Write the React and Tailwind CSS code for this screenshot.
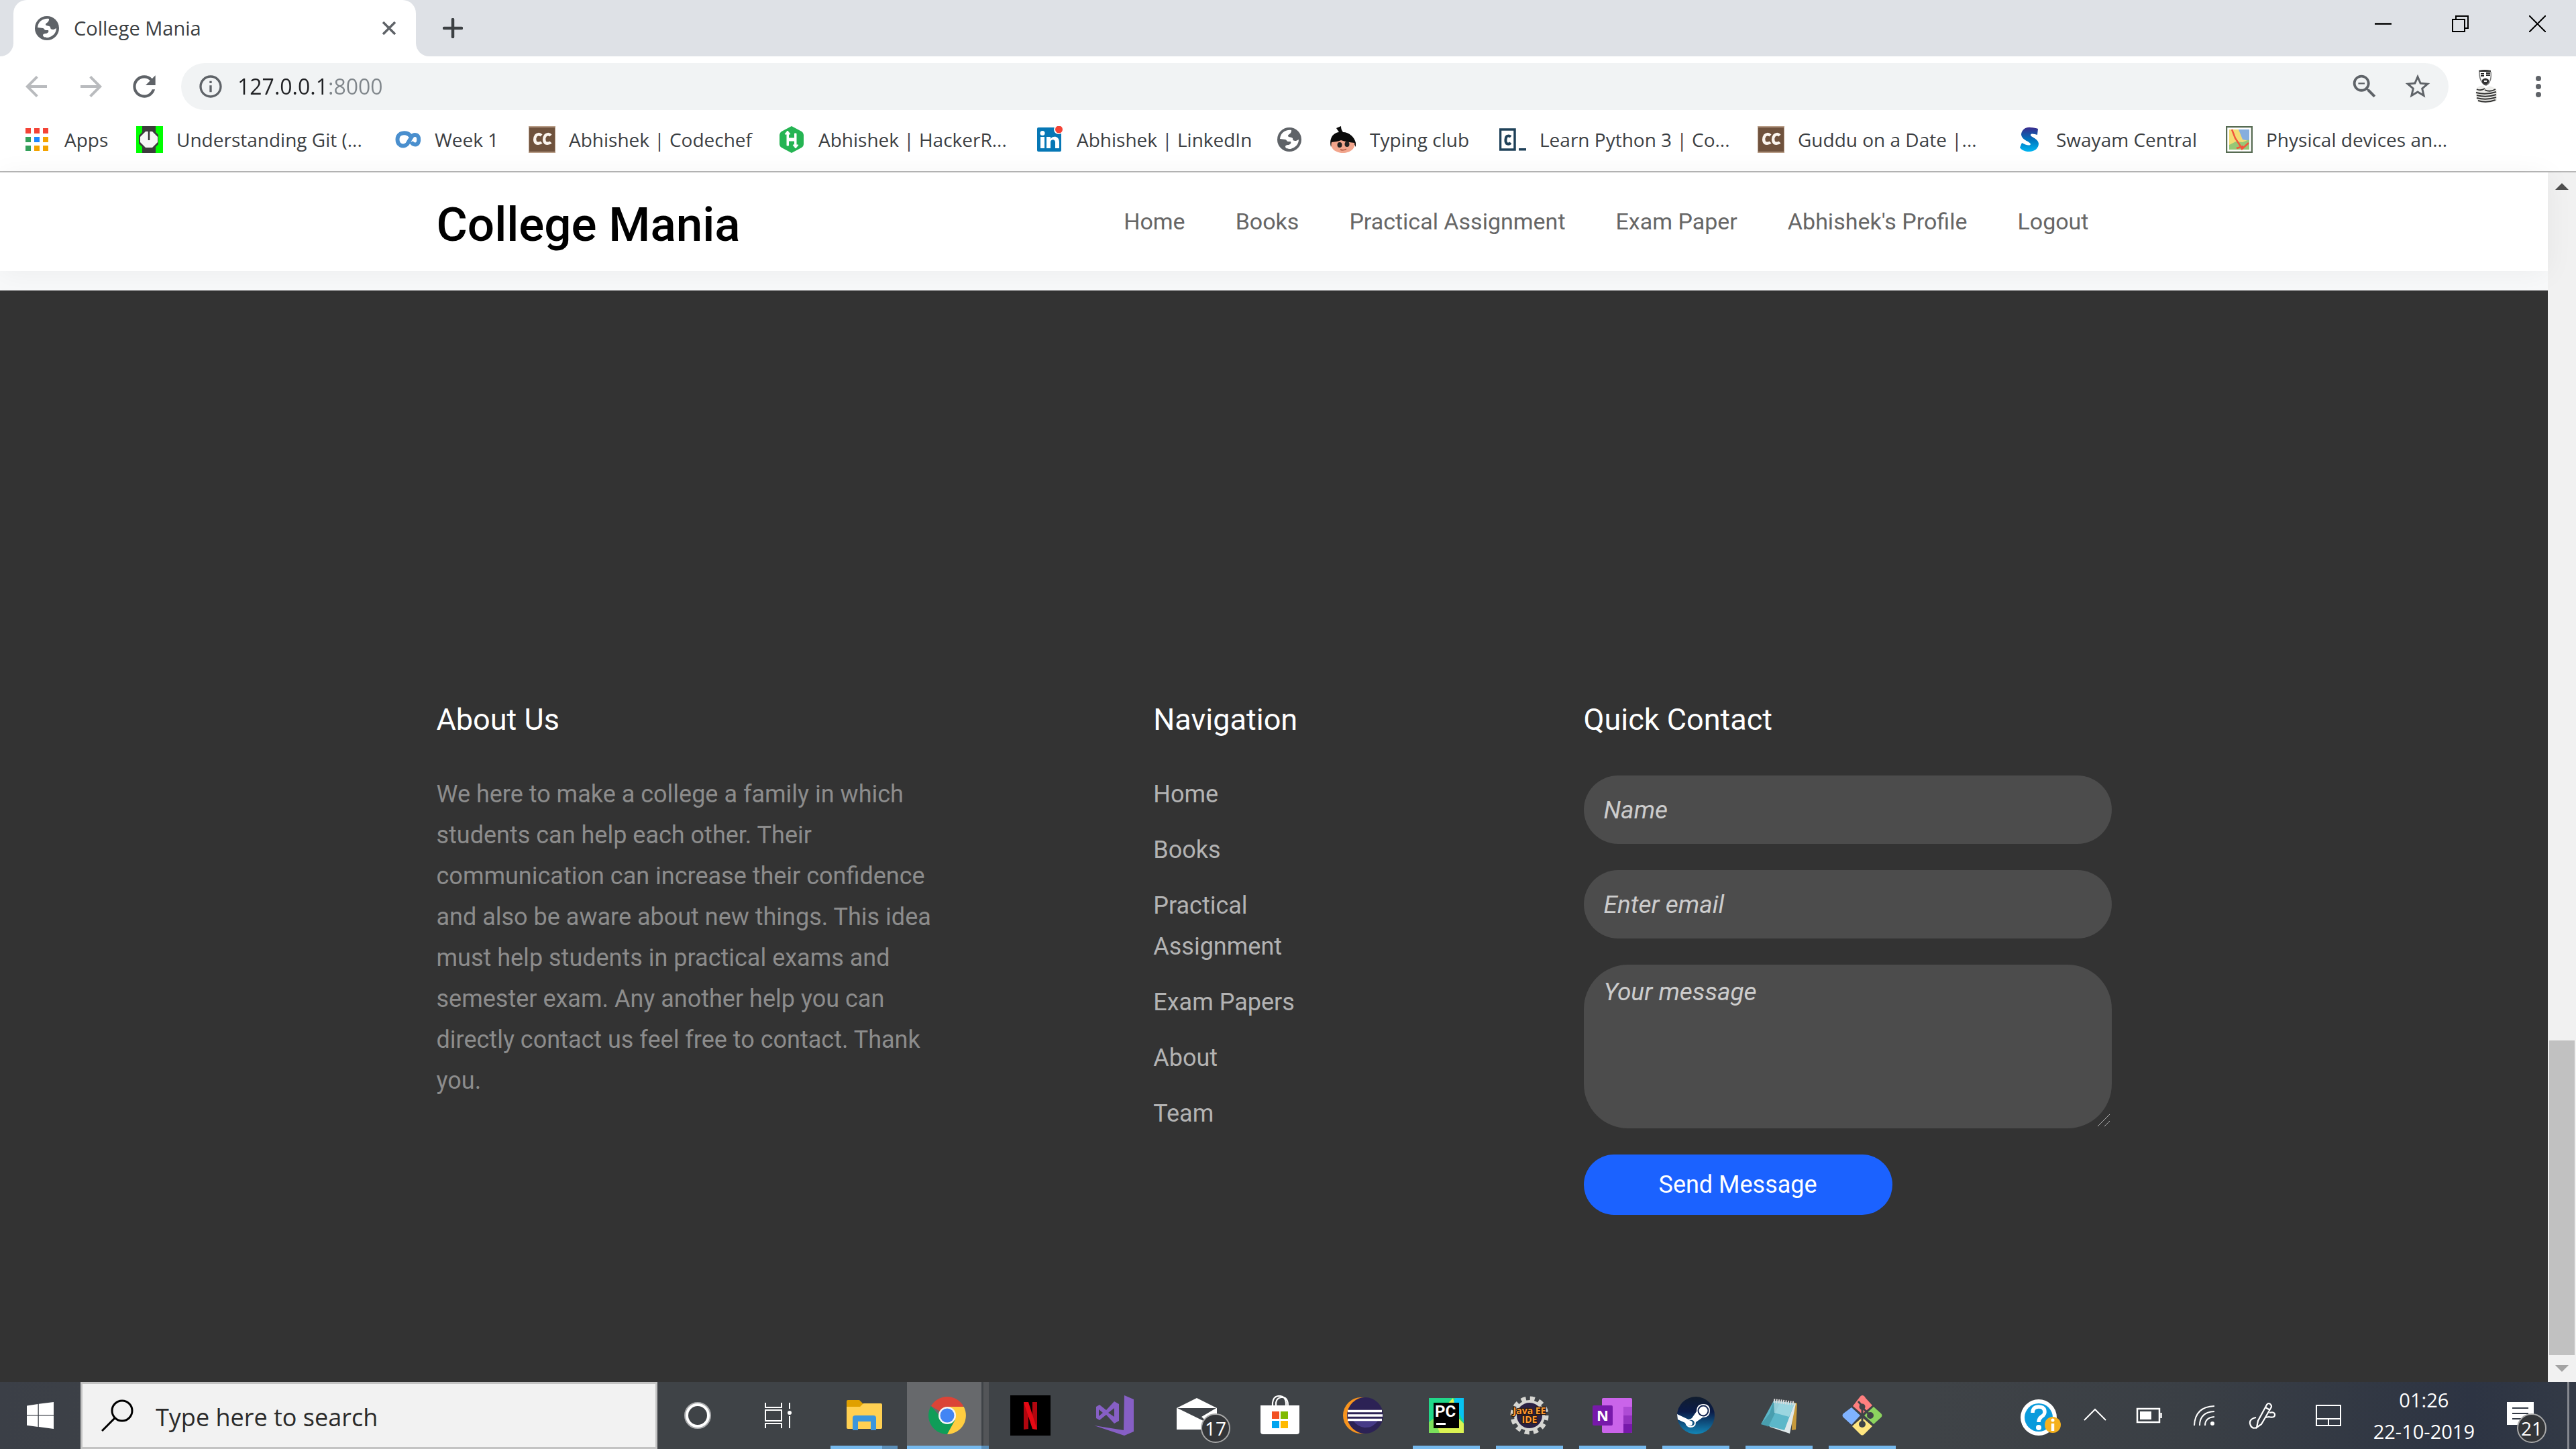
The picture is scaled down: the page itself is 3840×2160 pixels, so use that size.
import React from "react";

/* ---------- shared glyphs ---------- */

const materialPaths = {
  back: "M20 11H7.83l5.59-5.59L12 4l-8 8 8 8 1.41-1.41L7.83 13H20v-2z",
  forward: "M12 4l-1.41 1.41L16.17 11H4v2h12.17l-5.58 5.59L12 20l8-8z",
  reload:
    "M17.65 6.35C16.2 4.9 14.21 4 12 4c-4.42 0-7.99 3.58-7.99 8s3.57 8 7.99 8c3.73 0 6.84-2.55 7.73-6h-2.08c-.82 2.33-3.04 4-5.65 4-3.31 0-6-2.69-6-6s2.69-6 6-6c1.66 0 3.14.69 4.22 1.78L13 11h7V4l-2.35 2.35z",
  info: "M11 7h2v2h-2zm0 4h2v6h-2zm1-9C6.48 2 2 6.48 2 12s4.48 10 10 10 10-4.48 10-10S17.52 2 12 2zm0 18c-4.41 0-8-3.59-8-8s3.59-8 8-8 8 3.59 8 8-3.59 8-8 8z",
  zoomOut:
    "M15.5 14h-.79l-.28-.27C15.41 12.59 16 11.11 16 9.5 16 5.91 13.09 3 9.5 3S3 5.91 3 9.5 5.91 16 9.5 16c1.61 0 3.09-.59 4.23-1.57l.27.28v.79l5 4.99L20.49 19l-4.99-5zm-6 0C7.01 14 5 11.99 5 9.5S7.01 5 9.5 5 14 7.01 14 9.5 11.99 14 9.5 14zM7 9h5v1.2H7z",
  star: "M22 9.24l-7.19-.62L12 2 9.19 8.63 2 9.24l5.46 4.73L5.82 21 12 17.27 18.18 21l-1.63-7.03L22 9.24zM12 15.4l-3.76 2.27 1-4.28-3.32-2.88 4.38-.38L12 6.1l1.71 4.04 4.38.38-3.32 2.88 1 4.28L12 15.4z",
};

function Material({ name, className }) {
  return (
    <svg viewBox="0 0 24 24" className={className} fill="currentColor" aria-hidden="true">
      <path d={materialPaths[name]} />
    </svg>
  );
}

function Globe() {
  return (
    <svg viewBox="0 0 36 36" className="size-9 shrink-0" aria-hidden="true">
      <circle cx="18" cy="18" r="18" fill="#5f6368" />
      <path
        d="M21 4C12 3 5 8 4 17l8 1c2 0 2 3 4 3h4c1 2 0 4-3 5-2 0-5 0-5 3 1 3 5 3 8 3 7-2 12-7 12-14l-4 2c-4 0-5-1-5-4-2-2-6-1-7-3 0-3 3-3 4-5 1-1 1-3 1-4z"
        fill="#fff"
      />
    </svg>
  );
}

/* ---------- bookmark icons ---------- */

function AppsIcon() {
  const cells = ["#f44336", "#f44336", "#f44336", "#34a05a", "#1e88ff", "#f4a300", "#34a05a", "#f4a300", "#f4a300"];
  return (
    <svg viewBox="0 0 38 34" className="h-[34px] w-[38px] shrink-0" aria-hidden="true">
      {cells.map((c, i) => (
        <rect key={i} x={(i % 3) * 13} y={Math.floor(i / 3) * 13} width="8" height="8" fill={c} />
      ))}
    </svg>
  );
}

function ClockIcon() {
  return (
    <svg viewBox="0 0 40 40" className="size-10 shrink-0" aria-hidden="true">
      <rect width="40" height="40" fill="#00ff00" />
      <path d="M9 0h20v9l4 4v14l-4 4v9H9v-9l-5-5V14l5-5z" fill="#3c3c3c" />
      <path d="M14 8h10l8 8v8l-8 8H14l-8-8v-8z" fill="#f5f5f5" />
      <path d="M19 8v13" stroke="#333" strokeWidth="2.5" />
    </svg>
  );
}

function CourseraIcon() {
  return (
    <svg viewBox="0 0 40 40" className="size-10 shrink-0" aria-hidden="true">
      <path
        d="M25 15C22 10 15 9 10 11.500 4 15 4 25 10 28.500c5 2.500 10 0 12-5l5-8c3-4 9-3 10 2 1 6-1 10-5 10-3 0-5-2-6-4"
        transform="translate(-1 0)"
        fill="none"
        stroke="#4a8fce"
        strokeWidth="6"
      />
    </svg>
  );
}

function CodechefIcon() {
  return (
    <svg viewBox="0 0 40 40" className="size-10 shrink-0" aria-hidden="true">
      <rect width="40" height="40" fill="#b79c86" />
      <rect x="1" y="2" width="38" height="36" fill="#6f523d" />
      <path
        d="M19 14c-3-3-6-2-8 0-3 4-2 9 0 11 2 1 6 1 8-1M33 14c-3-3-6-2-8 0-3 4-2 9 0 11 2 1 6 1 8-1"
        fill="none"
        stroke="#fbf5ee"
        strokeWidth="4.500"
      />
    </svg>
  );
}

function HackerRankIcon() {
  return (
    <svg viewBox="0 0 40 40" className="size-10 shrink-0" aria-hidden="true">
      <path d="M20 0l15 8q3 2 3 5v14q0 3-3 5l-15 8-15-8q-3-2-3-5V13q0-3 3-5z" fill="#25b453" />
      <path
        d="M13 12h2.500V29H13zM16 18h8v4h-8zM24.500 11v17H27V11zM14 7l-4 5h8zM26 33l-4-5h8z"
        fill="#fff"
        stroke="#fff"
      />
    </svg>
  );
}

function LinkedInIcon() {
  return (
    <svg viewBox="0 0 40 40" className="size-10 shrink-0" aria-hidden="true">
      <rect x="1" y="2" width="36" height="36" rx="2" fill="#0677b5" />
      <circle cx="9" cy="10.500" r="3.500" fill="#fff" />
      <path d="M6 16h6v17H6zM15 16h6v3c3-5 13-5 13 5v9h-6v-9c0-5-7-5-7 0v9h-6z" fill="#fff" />
      <circle cx="33" cy="5" r="7" fill="#fff" />
      <circle cx="33.500" cy="5" r="5.500" fill="#f44336" />
    </svg>
  );
}

function TypingClubIcon() {
  return (
    <svg viewBox="0 0 40 40" className="size-10 shrink-0" aria-hidden="true">
      <path d="M10 3l7-3c0 4 1 6 3 9 9 0 17 7 19 16v6l-3-5H4l-2 5C-1 20 4 10 14 9z" fill="#0b0b0b" />
      <path d="M3 24c5-1 10-1 14-3 5 2 12 3 20 4 2 8-6 15-17 15S0 33 3 24z" fill="#f2a58c" />
      <ellipse cx="15" cy="28" rx="3.500" ry="4" fill="#222" />
      <ellipse cx="26" cy="27" rx="3.500" ry="4" fill="#222" />
      <path d="M16 35q5 2 9-1" stroke="#a4503c" strokeWidth="1.500" fill="none" />
    </svg>
  );
}

function CodecademyIcon() {
  return (
    <svg viewBox="0 0 40 40" className="size-10 shrink-0" aria-hidden="true">
      <rect x="1.500" y="5" width="21.500" height="30" fill="#fff" stroke="#1f4159" strokeWidth="3.500" />
      <path d="M17 16c-2-2-6-2-7 1-1 4-1 7 1 9 2 1 4 1 6-1" fill="none" stroke="#1f4159" strokeWidth="4" />
      <rect x="29" y="33" width="11" height="3.500" fill="#1f4159" />
    </svg>
  );
}

function SwayamIcon() {
  return (
    <svg viewBox="0 0 40 40" className="size-10 shrink-0" aria-hidden="true">
      <defs>
        <linearGradient id="swayam" x1="0" y1="0" x2="0" y2="1">
          <stop offset="0" stopColor="#3a2a8c" />
          <stop offset="0.5" stopColor="#0072bc" />
          <stop offset="1" stopColor="#00b5f1" />
        </linearGradient>
      </defs>
      <path
        d="M33 4l-1 9c-4-1-9-3-10 0s11 5 12 13c0 7-6 12-14 12-6 0-11-2-14-6l3-7c5 3 12 5 13 2 0-4-14-6-14-15C9 5 15 1 22 2c5 0 8 1 11 2z"
        fill="url(#swayam)"
      />
    </svg>
  );
}

function MapIcon() {
  return (
    <svg viewBox="0 0 40 40" className="size-10 shrink-0" aria-hidden="true">
      <rect x="1" y="1" width="38" height="38" fill="#fff" stroke="#566b52" strokeWidth="2.500" />
      <rect x="5" y="5" width="30" height="30" fill="#f3dc74" />
      <path d="M19 5h16v17l-10-2z" fill="#86aede" />
      <path d="M5 28l10-5 10 1 10-4v15H5z" fill="#97c776" />
      <path d="M9 5l5 13 6 9 5 8M34 25l-11 10M16 33l10-3" fill="none" stroke="#f2553c" strokeWidth="2.500" />
    </svg>
  );
}

/* ---------- browser chrome ---------- */

function TabStrip() {
  return (
    <div className="flex h-[84px] items-stretch justify-between bg-[#dee1e6] text-[29px] text-[#3c4043]">
      <div className="flex items-center">
        <div className="flex h-full w-5 items-end bg-white">
          <span className="h-full w-full rounded-br-[20px] bg-[#dee1e6]" />
        </div>
        <div className="flex h-full w-[600px] items-center rounded-t-[20px] bg-white px-8">
          <Globe />
          <span className="ml-[22px] flex-1">College Mania</span>
          <button type="button" aria-label="Close tab" className="-mr-3.5 p-3">
            <svg viewBox="0 0 20 20" className="size-5">
              <path d="M1 1l18 18M19 1L1 19" stroke="#5f6368" strokeWidth="3.500" />
            </svg>
          </button>
        </div>
        <div className="flex h-full w-5 bg-white">
          <span className="h-full w-full rounded-bl-[20px] bg-[#dee1e6]" />
        </div>
        <button type="button" aria-label="New tab" className="ml-5">
          <svg viewBox="0 0 30 30" className="size-[30px]">
            <path d="M15 2v26M2 15h26" stroke="#3c4043" strokeWidth="4.500" strokeLinecap="round" />
          </svg>
        </button>
      </div>
      <div className="flex h-[70px] items-center">
        <button type="button" aria-label="Minimize" className="flex w-[115px] justify-center">
          <svg viewBox="0 0 25 25" className="size-[25px]">
            <path d="M0 12.500h25" stroke="#000" strokeWidth="2.500" />
          </svg>
        </button>
        <button type="button" aria-label="Restore" className="flex w-[115px] justify-center">
          <svg viewBox="0 0 25 25" className="size-[25px]" fill="none" stroke="#000" strokeWidth="2">
            <path d="M1 6h18v18H1zM6 6V1h18v18h-5" />
          </svg>
        </button>
        <button type="button" aria-label="Close" className="flex w-[115px] justify-center">
          <svg viewBox="0 0 25 25" className="size-[25px]">
            <path d="M0 0l25 25M25 0L0 25" stroke="#000" strokeWidth="2" />
          </svg>
        </button>
      </div>
    </div>
  );
}

function Avatar() {
  return (
    <svg viewBox="0 0 50 50" className="size-[50px]" aria-hidden="true">
      <path d="M15 1q9-2 18 0v3l-4-1H20l-4 1z" fill="#333" />
      <path d="M16 3q0 10 3 14 3 6 7 6 4-1 6-7 2-5 1-13" fill="#fff" stroke="#777" strokeWidth="1.500" />
      <path d="M18 6h5M26 8h6M18 9h5M26 5h6" stroke="#222" strokeWidth="2" />
      <path d="M20 15q5-5 10 0v4q-5 7-10 0z" fill="#333" />
      <rect x="23" y="16" width="4" height="2" fill="#eee" />
      <path d="M12 27q7-5 10-3 3 6 9 0 11 3 11 8v14q-14 6-28 2-5-8-2-21z" fill="#ededea" />
      <path
        d="M12 29q6 3 12-1M24 30q8 4 16-1M11 34q14 4 30-1M12 38q14 4 29-1M12 42q14 4 29-1M14 46q12 4 26-1"
        stroke="#333"
        strokeWidth="1.900"
        fill="none"
      />
    </svg>
  );
}

function Toolbar() {
  return (
    <div className="flex h-[90px] items-center bg-white">
      <button type="button" aria-label="Back" className="ml-[30px] text-[#b9bbbe]">
        <Material name="back" className="size-12" />
      </button>
      <button type="button" aria-label="Forward" className="ml-[34px] text-[#b9bbbe]">
        <Material name="forward" className="size-12" />
      </button>
      <button type="button" aria-label="Reload" className="ml-[30px] text-[#5f6368]">
        <Material name="reload" className="size-[50px]" />
      </button>
      <div className="ml-[30px] flex h-[70px] flex-1 items-center rounded-full bg-[#f1f3f4] px-6 text-[#5f6368]">
        <Material name="info" className="size-10" />
        <input
          aria-label="Address"
          defaultValue="127.0.0.1:8000"
          className="ml-5 flex-1 bg-[linear-gradient(to_right,#202124_136px,#80868b_136px)] bg-clip-text text-[32px] text-transparent outline-none"
        />
        <button type="button" aria-label="Zoom">
          <Material name="zoomOut" className="size-[46px]" />
        </button>
        <button type="button" aria-label="Bookmark this page" className="ml-[34px]">
          <Material name="star" className="size-11" />
        </button>
      </div>
      <button type="button" aria-label="Profile" className="ml-[30px]">
        <Avatar />
      </button>
      <button type="button" aria-label="Menu" className="ml-[30px] mr-8">
        <svg viewBox="0 0 48 48" className="size-12" fill="#5f6368">
          <circle cx="24" cy="12" r="4" />
          <circle cx="24" cy="24" r="4" />
          <circle cx="24" cy="36" r="4" />
        </svg>
      </button>
    </div>
  );
}

const bookmarks = [
  { icon: <AppsIcon />, label: "Apps", width: "w-[125px]" },
  { icon: <ClockIcon />, label: "Understanding Git (...", width: "w-[345px]" },
  { icon: <CourseraIcon />, label: "Week 1", width: "w-[160px]" },
  { icon: <CodechefIcon />, label: "Abhishek | Codechef", width: "w-[332px]" },
  { icon: <HackerRankIcon />, label: "Abhishek | HackerR...", width: "w-[345px]" },
  { icon: <LinkedInIcon />, label: "Abhishek | LinkedIn", width: "w-[319px]" },
  { icon: <Globe />, label: "", width: "w-[38px]" },
  { icon: <TypingClubIcon />, label: "Typing club", width: "w-[213px]" },
  { icon: <CodecademyIcon />, label: "Learn Python 3 | Co...", width: "w-[345px]" },
  { icon: <CodechefIcon />, label: "Guddu on a Date |...", width: "w-[345px]" },
  { icon: <SwayamIcon />, label: "Swayam Central", width: "w-[273px]" },
  { icon: <MapIcon />, label: "Physical devices an...", width: "w-[345px]" },
];

function BookmarksBar() {
  return (
    <nav
      aria-label="Bookmarks"
      className="flex h-[83px] items-start gap-10 border-b-2 border-[#b6b6b6] bg-white pl-[38px] pt-3.5 text-[28px] leading-10 text-[#3c4043]"
    >
      {bookmarks.map((b, i) => (
        <a
          key={i}
          href="#bookmark"
          aria-label={b.label || "Untitled bookmark"}
          className={`flex h-10 shrink-0 items-center gap-5 whitespace-nowrap ${b.width}`}
        >
          {b.icon}
          {b.label && <span>{b.label}</span>}
        </a>
      ))}
    </nav>
  );
}

/* ---------- web page ---------- */

const menu = ["Home", "Books", "Practical Assignment", "Exam Paper", "Abhishek's Profile", "Logout"];
const footerLinks = ["Home", "Books", "Practical Assignment", "Exam Papers", "About", "Team"];

function SiteHeader() {
  return (
    <header className="relative h-[147px] bg-white shadow-[0_4px_40px_rgba(0,0,0,0.05)]">
      <div className="mx-auto flex h-full max-w-[2565px] items-center justify-between px-[34px]">
        <a href="#home" className="pt-2 text-[71px] font-medium leading-none text-black">
          College Mania
        </a>
        <nav aria-label="Main" className="flex gap-[7px] text-[34px] text-[#666666]">
          {menu.map((m) => (
            <a key={m} href="#menu" className="px-[34px]">
              {m}
            </a>
          ))}
        </nav>
      </div>
    </header>
  );
}

function FooterTitle({ children }) {
  return <h2 className="mb-[54px] text-[45px] leading-[54px] text-white">{children}</h2>;
}

function SiteFooter() {
  const field =
    "block h-[102px] w-full rounded-full bg-[#4c4c4c] px-[30px] text-[37px] text-white italic outline-none placeholder:text-[#cccccc] placeholder:opacity-100";
  return (
    <footer className="flex-1 bg-[#333333] pt-[613px] text-[36px] leading-[61px]">
      <div className="mx-auto grid max-w-[2565px] grid-cols-12">
        <section className="col-span-5 px-[34px]">
          <FooterTitle>About Us</FooterTitle>
          <p className="max-w-[760px] text-[#8c8c8c]">
            We here to make a college a family in which students can help each other. Their communication can increase
            their confidence and also be aware about new things. This idea must help students in practical exams and
            semester exam. Any another help you can directly contact us feel free to contact. Thank you.
          </p>
        </section>
        <section className="col-span-3 px-[34px]">
          <FooterTitle>Navigation</FooterTitle>
          <ul className="flex max-w-[250px] flex-col gap-[22px] text-[#b3b3b3]">
            {footerLinks.map((l) => (
              <li key={l}>
                <a href="#footer">{l}</a>
              </li>
            ))}
          </ul>
        </section>
        <section className="col-span-4 px-[34px]">
          <FooterTitle>Quick Contact</FooterTitle>
          <form className="flex flex-col items-start gap-[39px] pt-0.5" onSubmit={(e) => e.preventDefault()}>
            <input aria-label="Name" type="text" placeholder="Name" className={field} />
            <input aria-label="Enter email" type="email" placeholder="Enter email" className={field} />
            <div className="relative w-full">
              <textarea
                aria-label="Your message"
                placeholder="Your message"
                className="block h-[244px] w-full resize-none rounded-[66px] bg-[#4c4c4c] px-[30px] pt-3.5 text-[37px] leading-[54px] text-white italic outline-none placeholder:text-[#cccccc] placeholder:opacity-100"
              />
              <svg viewBox="0 0 20 20" className="absolute bottom-0.5 right-0.5 size-5" aria-hidden="true">
                <path d="M1 19L19 1M11 19l8-8" stroke="#b5b5b5" strokeWidth="1" />
              </svg>
            </div>
            <button type="submit" className="h-[90px] rounded-full bg-[#1b62ff] px-28 text-white">
              Send Message
            </button>
          </form>
        </section>
      </div>
    </footer>
  );
}

function Scrollbar() {
  return (
    <div className="flex w-[42px] flex-col bg-[#f1f1f1]">
      <button type="button" aria-label="Scroll up" className="flex h-[42px] items-center justify-center">
        <svg viewBox="0 0 20 10" className="h-2.5 w-5" fill="#505050">
          <path d="M0 10L10 0l10 10z" />
        </svg>
      </button>
      <div className="flex flex-1 flex-col justify-end px-0.5">
        <div className="h-[469px] bg-[#c1c1c1]" />
      </div>
      <button type="button" aria-label="Scroll down" className="flex h-10 items-center justify-center">
        <svg viewBox="0 0 20 10" className="h-2.5 w-5" fill="#a3a3a3">
          <path d="M0 0L10 10 20 0z" />
        </svg>
      </button>
    </div>
  );
}

/* ---------- taskbar icons (60px box) ---------- */

function TaskIcon({ children }) {
  return (
    <svg viewBox="0 0 60 60" className="size-[60px]" aria-hidden="true">
      {children}
    </svg>
  );
}

const ExplorerIcon = () => (
  <TaskIcon>
    <path d="M4 9q0-2 2-2h17l5 5v9H4z" fill="#e0a000" />
    <path d="M4 17h20l5-5h26q2 0 2 2v34q0 2-2 2H6q-2 0-2-2z" fill="#ffd052" />
    <path d="M13 52V34q0-4 4-4h27q4 0 4 4v18h-8V39H21v13z" fill="#3a96dd" />
  </TaskIcon>
);

const ChromeIcon = () => (
  <TaskIcon>
    <path d="M30 30L5.800 16A28 28 0 0 1 54.200 16z" fill="#db4437" />
    <path d="M30 30H18L5.800 16A28 28 0 0 0 30 58l12-21z" fill="#0f9d58" />
    <path d="M30 17h24.700A28 28 0 0 1 30 58l11.500-21z" fill="#ffcd40" />
    <circle cx="30" cy="30" r="13" fill="#f5f5f5" />
    <circle cx="30" cy="30" r="10.500" fill="#4285f4" />
  </TaskIcon>
);

const NetflixIcon = () => (
  <TaskIcon>
    <rect width="60" height="60" fill="#000" />
    <path d="M20 10h7v40l-7 1zM33 10h7v41l-7-1z" fill="#b1060f" />
    <path d="M20 10h7l13 41-7-1z" fill="#e50914" />
  </TaskIcon>
);

const VisualStudioIcon = () => (
  <TaskIcon>
    <path d="M46 0l14 6v48l-14 6L1 45l44 7z" fill="#865fc5" />
    <path
      fillRule="evenodd"
      d="M4 17l5-3 10 8L31 9l7 4v25l-7 4-12-13-10 8-5-3zM8 21v10l6-5zM31 19v13l-9-6z"
      fill="#865fc5"
    />
  </TaskIcon>
);

const MailIcon = () => (
  <TaskIcon>
    <path d="M0 19L30 4l30 15v32H0z" fill="#fff" />
    <path d="M1 19h58L37 32l11 10z" fill="#3f4348" />
  </TaskIcon>
);

const StoreIcon = () => (
  <TaskIcon>
    <path d="M19 16V11Q20 1 29 1t10 10v5M24 16v-5q1-7 8-8 10-1 10 13" fill="none" stroke="#fff" strokeWidth="2.200" />
    <path d="M1 15h58v39q0 4-4 4H5q-4 0-4-4z" fill="#fff" />
    <path d="M18 24h11v11H18z" fill="#f25022" />
    <path d="M31 24h11v11H31z" fill="#7fba00" />
    <path d="M18 38h11v11H18z" fill="#00a4ef" />
    <path d="M31 38h11v11H31z" fill="#ffb900" />
  </TaskIcon>
);

const EclipseIcon = () => (
  <TaskIcon>
    <circle cx="27" cy="30" r="27" fill="#f7941e" />
    <circle cx="33" cy="30" r="27" fill="#2c2255" />
    <path d="M15 38h37q-7 10-18 10T15 38z" fill="#463a87" />
    <path d="M7 23.500h51M7 30h52M7 36.500h51" stroke="#fff" strokeWidth="3.500" />
  </TaskIcon>
);

const PycharmIcon = () => (
  <TaskIcon>
    <rect x="4" y="4" width="52" height="52" fill="#21d789" />
    <path d="M44 4h12v36L40 10z" fill="#07c3f2" />
    <path d="M4 56V42l36-38 8 30 8 8v14z" fill="#fcf84a" opacity="0.85" />
    <path d="M4 56V40l8-6 8 22z" fill="#7be05b" />
    <rect x="11" y="11" width="38" height="38" fill="#000" />
    <text x="13" y="32" fontFamily="Roboto" fontWeight="700" fontSize="24" fill="#fff">
      PC
    </text>
    <rect x="15" y="41" width="14" height="3" fill="#fff" />
  </TaskIcon>
);

const JavaEEIcon = () => (
  <TaskIcon>
    <circle cx="30" cy="30" r="25" fill="none" stroke="#d6d6d2" strokeWidth="7" strokeDasharray="7 6.090" />
    <circle cx="30" cy="30" r="21" fill="#2a2144" stroke="#d6d6d2" strokeWidth="4" />
    <g
      textAnchor="middle"
      fontFamily="Open Sans"
      fontWeight="700"
      fontSize="14"
      fill="#ff9a2e"
      stroke="#2b1a10"
      strokeWidth="2.500"
      paintOrder="stroke"
    >
      <text x="30" y="28">
        Java EE
      </text>
      <text x="30" y="41">
        IDE
      </text>
    </g>
  </TaskIcon>
);

const OneNoteIcon = () => (
  <TaskIcon>
    <rect x="14" y="4" width="45" height="52" rx="2" fill="#ca64ea" />
    <path d="M46 17h13v13H46z" fill="#ae4bd5" />
    <path d="M46 30h13v13H46z" fill="#9332bf" />
    <path d="M46 43h13v11q0 2-2 2H46z" fill="#7719aa" />
    <rect x="0" y="15" width="30" height="30" rx="2" fill="#7719aa" />
    <text x="15" y="38" textAnchor="middle" fontFamily="Open Sans" fontWeight="700" fontSize="22" fill="#fff">
      N
    </text>
  </TaskIcon>
);

const SteamIcon = () => (
  <TaskIcon>
    <defs>
      <linearGradient id="steam" x1="0" y1="0" x2="0" y2="1">
        <stop offset="0" stopColor="#111d2e" />
        <stop offset="0.4" stopColor="#0a1b48" />
        <stop offset="1" stopColor="#1387b8" />
      </linearGradient>
    </defs>
    <circle cx="30" cy="30" r="28" fill="url(#steam)" />
    <path d="M2 28l17 8q4-1 5-2l7-10q0-11 10-11t10 10-11 10l-10 7q0 8-8 8-6 0-8-7l-11-5z" fill="#fff" />
    <circle cx="41" cy="23" r="7.500" fill="#fff" stroke="#10224f" strokeWidth="2" />
    <path d="M17 44q8 3 8-3 0-3-5-4 8-1 8 5-2 6-11 2z" fill="#10527f" />
  </TaskIcon>
);

const NotepadIcon = () => (
  <TaskIcon>
    <path d="M50 10l7 2-2 39-6 1z" fill="#c79a3c" />
    <path d="M22 8l33 4-9 45-30-10z" fill="#dfe8ea" />
    <path d="M22 8l31 4-15 40L3 43z" fill="#5cb7c9" />
    <path d="M3 43l13-16 6-19 10 2-18 37z" fill="#3c8d9d" opacity="0.6" />
    <path d="M22 8l31 4-8 20-22-6z" fill="#b6e3ea" opacity="0.7" />
    <path d="M22 8l31 4" stroke="#ddd" strokeWidth="6" strokeDasharray="2 1.500" />
  </TaskIcon>
);

const GitIcon = () => (
  <TaskIcon>
    <path d="M30 0q3 0 5 4l10 11-15 13-14-12L26 3q2-3 4-3z" fill="#ff7f7f" />
    <path d="M14 18l13 12-13 14L2 33q-3-3 0-6z" fill="#80b3ff" />
    <path d="M47 17l11 10q3 3 0 6L47 43 33 30z" fill="#8cd45f" />
    <path d="M30 33l15 13-12 12q-3 3-6 0L15 46z" fill="#ffe680" />
    <path d="M24 9l6 7v26M30 18l12 12" stroke="#3f4348" strokeWidth="3" fill="none" />
    <circle cx="30" cy="17" r="4.500" fill="#3f4348" />
    <circle cx="42" cy="30" r="5" fill="#3f4348" />
    <circle cx="30" cy="43" r="5" fill="#3f4348" />
  </TaskIcon>
);

function CountBadge({ children }) {
  return (
    <span className="absolute flex size-11 items-center justify-center rounded-full border-2 border-[#a8a8a8] bg-[#333538] text-[28px] leading-none text-white">
      {children}
    </span>
  );
}

const tasks = [
  { name: "File Explorer", icon: <ExplorerIcon />, state: "stack" },
  { name: "Google Chrome", icon: <ChromeIcon />, state: "active" },
  { name: "Netflix", icon: <NetflixIcon /> },
  { name: "Visual Studio", icon: <VisualStudioIcon /> },
  { name: "Mail", icon: <MailIcon />, badge: "17" },
  { name: "Microsoft Store", icon: <StoreIcon /> },
  { name: "Eclipse", icon: <EclipseIcon /> },
  { name: "PyCharm", icon: <PycharmIcon />, state: "open" },
  { name: "Java EE IDE", icon: <JavaEEIcon />, state: "open" },
  { name: "OneNote", icon: <OneNoteIcon />, state: "open" },
  { name: "Steam", icon: <SteamIcon />, state: "open" },
  { name: "Notepad", icon: <NotepadIcon />, state: "open" },
  { name: "Git", icon: <GitIcon />, state: "open" },
];

function TaskButton({ task }) {
  const active = task.state === "active";
  return (
    <button type="button" aria-label={task.name} className="relative flex h-full w-[124px] shrink-0 flex-col">
      <span className={`flex w-full flex-1 ${active ? "pl-0.5" : ""}`}>
        <span
          className={`flex flex-1 items-center justify-center pt-[5px] ${active ? "bg-[#67696c] pl-2" : ""}`}
        >
          {task.icon}
        </span>
        {active && <span className="ml-[3px] w-2 bg-[#535558]" />}
      </span>
      {active && (
        <span className="flex h-[5px] w-full pl-0.5">
          <span className="flex-1 bg-[#76b9ed]" />
          <span className="w-[11px] bg-[#5b8fb9]" />
        </span>
      )}
      {task.state === "stack" && (
        <span className="flex h-[5px] w-full px-3">
          <span className="flex-1 bg-[#76b9ed]" />
          <span className="w-[23px] bg-[#5b8fb9]" />
        </span>
      )}
      {task.state === "open" && (
        <span className="flex h-[5px] w-full px-3">
          <span className="flex-1 bg-[#76b9ed]" />
        </span>
      )}
      {!task.state && <span className="h-[5px]" />}
      {task.badge && (
        <span className="absolute left-[68px] top-[47px]">
          <CountBadge>{task.badge}</CountBadge>
        </span>
      )}
    </button>
  );
}

function Tray() {
  return (
    <div className="flex h-full items-center text-white">
      <button type="button" aria-label="Help">
        <svg viewBox="0 0 60 54" className="mt-1.5 h-[54px] w-[60px]">
          <circle cx="27" cy="27" r="27" fill="#fff" />
          <circle cx="27" cy="27" r="21" fill="#0a9bdc" />
          <path d="M18 20q0-9 9-9t9 8q0 4-5 7-4 3-4 8" fill="none" stroke="#fff" strokeWidth="5.500" />
          <circle cx="27" cy="42" r="4" fill="#fff" />
          <circle cx="48" cy="38" r="12" fill="#f5b11d" />
          <path d="M48 36v11" stroke="#fff" strokeWidth="4.500" />
          <circle cx="48" cy="31" r="2.500" fill="#fff" />
        </svg>
      </button>
      <button type="button" aria-label="Show hidden icons" className="ml-[34px]">
        <svg viewBox="0 0 34 34" className="size-[34px]" fill="none" stroke="currentColor" strokeWidth="2">
          <path d="M1 24L17 8l16 16" />
        </svg>
      </button>
      <button type="button" aria-label="Battery" className="ml-11">
        <svg viewBox="0 0 40 24" className="h-6 w-10" fill="none" stroke="currentColor" strokeWidth="2.500">
          <path d="M2 2h33v20H2z" />
          <path d="M6 6h17v12H6z" fill="currentColor" stroke="none" />
          <path d="M37.500 8v8" />
        </svg>
      </button>
      <button type="button" aria-label="Wi-Fi" className="ml-[46px]">
        <svg viewBox="0 0 32 32" className="size-8" fill="none" stroke="currentColor" strokeWidth="2">
          <path d="M1 31Q2 3 31 2M9 31q0-20 22-21M17 31q0-12 14-13" />
          <circle cx="28" cy="28" r="3" fill="currentColor" stroke="none" />
        </svg>
      </button>
      <button type="button" aria-label="Windows Ink" className="ml-[50px]">
        <svg viewBox="0 0 40 40" className="size-10" fill="none" stroke="currentColor" strokeWidth="2.200">
          <path d="M12 38l2-10L27 4q3-4 6 0 2 2 0 5L19 33zM25 8l7 4" />
          <path d="M11 23Q1 25 2 32q2 9 10 6M31 16q8-2 8 3t-9 3l-5 1" />
        </svg>
      </button>
      <button type="button" aria-label="Touchpad" className="ml-[60px]">
        <svg viewBox="0 0 38 34" className="h-[34px] w-[38px]" fill="none" stroke="currentColor" strokeWidth="2">
          <path d="M1 2h36v30H1zM1 22h36M19 22v10" />
        </svg>
      </button>
      <time className="ml-12 flex flex-col items-center text-[29px] leading-[47px]">
        <span>01:26</span>
        <span>22-10-2019</span>
      </time>
      <button type="button" aria-label="Notifications" className="relative ml-12 mr-[50px]">
        <svg viewBox="0 0 40 40" className="size-10">
          <path d="M0 0h40v34H0z" fill="#fff" />
          <path d="M8 9h24M8 17h24M8 25h16" stroke="#333a45" strokeWidth="2.200" />
        </svg>
        <span className="absolute left-[15px] top-[17px]">
          <CountBadge>21</CountBadge>
        </span>
      </button>
      <span className="mr-2.5 h-full w-[3px] bg-[#85888f]" />
    </div>
  );
}

function Taskbar() {
  return (
    <div className="flex h-[100px] items-center justify-between bg-[linear-gradient(to_right,#3b3f47,#3f4347_10%,#3f4347_75%,#3a3f45_85%,#2d3443_96%,#333a46)]">
      <div className="flex h-full items-center">
        <button type="button" aria-label="Start" className="flex w-[120px] justify-center">
          <svg viewBox="0 0 40 40" className="size-10" fill="#fff">
            <path d="M0 5.500L16.500 3v16H0zM17.800 2.700L40 0v19H17.800zM0 20.300h16.500V37L0 34.700zM17.800 20.300H40V40l-22.200-3z" />
          </svg>
        </button>
        <label className="flex h-full w-[860px] items-center border-3 border-[#c3c3c3] bg-[#f2f2f2] pl-7">
          <svg viewBox="0 0 48 48" className="size-12 shrink-0" fill="none" stroke="#000" strokeWidth="3">
            <circle cx="31" cy="17" r="15" />
            <path d="M20 28L1 47" />
          </svg>
          <input
            type="search"
            aria-label="Search"
            placeholder="Type here to search"
            className="ml-[33px] mt-1.5 flex-1 text-[36px] outline-none placeholder:text-[#2b2b2b] placeholder:opacity-100"
          />
        </label>
        <button type="button" aria-label="Cortana" className="flex w-[120px] justify-center">
          <svg viewBox="0 0 40 40" className="size-10" fill="none">
            <circle cx="20" cy="20" r="18" stroke="#a9abad" strokeWidth="4" />
            <circle cx="20" cy="20" r="16" stroke="#fff" strokeWidth="4" />
          </svg>
        </button>
        <button type="button" aria-label="Task View" className="mr-1.5 flex w-[120px] justify-center">
          <svg viewBox="0 0 40 40" className="size-10" fill="none" stroke="#fff" strokeWidth="2">
            <path d="M1 1v7h24V1M1 12h24v16H1zM1 39v-7h24v7M37 1v9M37 21v18" />
            <circle cx="37" cy="16" r="3" fill="#fff" stroke="none" />
          </svg>
        </button>
        {tasks.map((t) => (
          <TaskButton key={t.name} task={t} />
        ))}
      </div>
      <Tray />
    </div>
  );
}

export default function App() {
  return (
    <div className="flex min-h-screen flex-col bg-white font-['Open_Sans',sans-serif]">
      <TabStrip />
      <Toolbar />
      <BookmarksBar />
      <div className="flex flex-1">
        <main className="flex flex-1 flex-col font-[Roboto,sans-serif]">
          <SiteHeader />
          <div className="h-[29px] bg-[#f8f9fa]" />
          <SiteFooter />
        </main>
        <Scrollbar />
      </div>
      <Taskbar />
    </div>
  );
}
